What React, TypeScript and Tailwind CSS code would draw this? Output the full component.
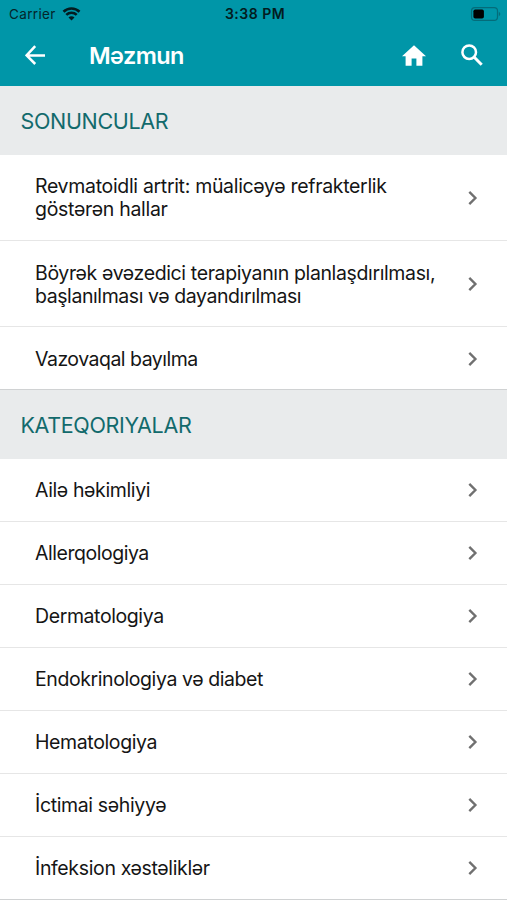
import React from "react";

type Item = { lines: { text: string; tracking: string }[]; className: string };

const recent: Item[] = [
  {
    lines: [
      { text: "Revmatoidli artrit: müalicəyə refrakterlik", tracking: "tracking-[-0.32px]" },
      { text: "göstərən hallar", tracking: "tracking-[-0.3px]" },
    ],
    className: "h-[86px] border-[#e6e6e6]",
  },
  {
    lines: [
      { text: "Böyrək əvəzedici terapiyanın planlaşdırılması,", tracking: "tracking-[-0.37px]" },
      { text: "başlanılması və dayandırılması", tracking: "tracking-[-0.42px]" },
    ],
    className: "h-[86px] border-[#e6e6e6] pt-px",
  },
  {
    lines: [{ text: "Vazovaqal bayılma", tracking: "tracking-[-0.51px]" }],
    className: "h-[63px] border-[#d0d2d3] pt-px",
  },
];

const categories: Item[] = [
  { lines: [{ text: "Ailə həkimliyi", tracking: "tracking-[-0.38px]" }], className: "h-[63px] border-[#e6e6e6]" },
  { lines: [{ text: "Allerqologiya", tracking: "tracking-[-0.46px]" }], className: "h-[63px] border-[#e6e6e6]" },
  { lines: [{ text: "Dermatologiya", tracking: "tracking-[-0.4px]" }], className: "h-[63px] border-[#e6e6e6]" },
  { lines: [{ text: "Endokrinologiya və diabet", tracking: "tracking-[-0.41px]" }], className: "h-[63px] border-[#e6e6e6]" },
  { lines: [{ text: "Hematologiya", tracking: "tracking-[-0.38px]" }], className: "h-[63px] border-[#e6e6e6]" },
  { lines: [{ text: "İctimai səhiyyə", tracking: "tracking-[-0.36px]" }], className: "h-[63px] border-[#e6e6e6]" },
  { lines: [{ text: "İnfeksion xəstəliklər", tracking: "tracking-[-0.35px]" }], className: "h-[63px] border-[#d0d2d3]" },
];

function Chevron() {
  return (
    <svg width="10" height="14" viewBox="0 0 10 14" fill="none" className="shrink-0">
      <path d="M1.3 .9 7.4 7l-6.1 6.1" stroke="#707070" strokeWidth="2.4" />
    </svg>
  );
}

function Section({ title }: { title: string }) {
  return (
    <h2 className="flex h-[69px] shrink-0 items-center bg-[#e9ebec] pt-px pl-[20.5px] text-[21.5px] tracking-[-0.35px] text-[#126a6c]">
      {title}
    </h2>
  );
}

function Row({ lines, className }: Item) {
  return (
    <li className={`flex shrink-0 items-center justify-between border-b pl-[35px] pr-[29px] ${className}`}>
      <div className="pt-px text-[19.5px] leading-[23px] whitespace-nowrap text-[#151515]">
        {lines.map(({ text, tracking }) => (
          <p key={text} className={tracking}>{text}</p>
        ))}
      </div>
      <Chevron />
    </li>
  );
}

function StatusBar() {
  return (
    <div className="grid h-[27px] grid-cols-3 items-center pl-[9px] pr-[6px] text-[13.5px] text-[#04252a]">
      <div className="flex items-center gap-[6px]">
        <span className="pt-px tracking-[0.35px]">Carrier</span>
        <svg width="19" height="14" viewBox="0 0 18 14" fill="none" stroke="#031c20">
          <path d="M1 4.8a11.5 11.5 0 0 1 16 0M3.8 7.9a7.5 7.5 0 0 1 10.4 0" strokeWidth="2.6" />
          <path d="m9 13.6-3-3.2a4.2 4.2 0 0 1 6 0z" fill="#031c20" stroke="none" />
        </svg>
      </div>
      <span className="text-center text-[14px] font-semibold tracking-[0.5px] text-[#031c20]">3:38 PM</span>
      <svg width="31" height="14" viewBox="0 0 31 14" className="justify-self-end">
        <rect x="1.5" y=".7" width="26" height="12.6" rx="3.4" fill="none" stroke="#046c7a" strokeWidth="1.2" />
        <rect x="3.4" y="2.5" width="10.5" height="9" rx="1.8" fill="#000" />
        <path d="M28.8 4.8c2 .8 2 3.6 0 4.4z" fill="#046c7a" />
      </svg>
    </div>
  );
}

export default function App() {
  return (
    <main className="flex h-[900px] w-[507px] flex-col overflow-hidden bg-white font-['Inter',sans-serif]">
      <header className="h-[86px] shrink-0 bg-[#0096a8]">
        <StatusBar />
        <div className="flex h-14 items-center pl-[25px] pr-[24px] text-white">
          <svg width="20" height="20" viewBox="0 0 20 20" fill="none" stroke="white" strokeWidth="2.5">
            <path d="M20 10.4H2M10.2 1.2 1.6 10.4l8.6 8.6" />
          </svg>
          <h1 className="ml-11 pt-px text-[23.5px] leading-7 font-semibold tracking-[-0.6px]">Məzmun</h1>
          <svg width="24" height="21" viewBox="0 0 24 21" fill="white" className="ml-auto">
            <path d="M9.6 20.8v-7.2h4.8v7.2h6V11.2H24L12 .2 0 11.2h3.6v9.6z" />
          </svg>
          <svg width="22" height="22" viewBox="0 0 22 22" fill="none" stroke="white" className="ml-[35px]">
            <circle cx="8.2" cy="8.2" r="6.8" strokeWidth="2.5" />
            <path d="m13 13 7.7 7.7" strokeWidth="3" />
          </svg>
        </div>
      </header>
      <Section title="SONUNCULAR" />
      <ul>
        {recent.map((item) => (
          <Row key={item.lines[0].text} {...item} />
        ))}
      </ul>
      <Section title="KATEQORIYALAR" />
      <ul>
        {categories.map((item) => (
          <Row key={item.lines[0].text} {...item} />
        ))}
      </ul>
    </main>
  );
}
